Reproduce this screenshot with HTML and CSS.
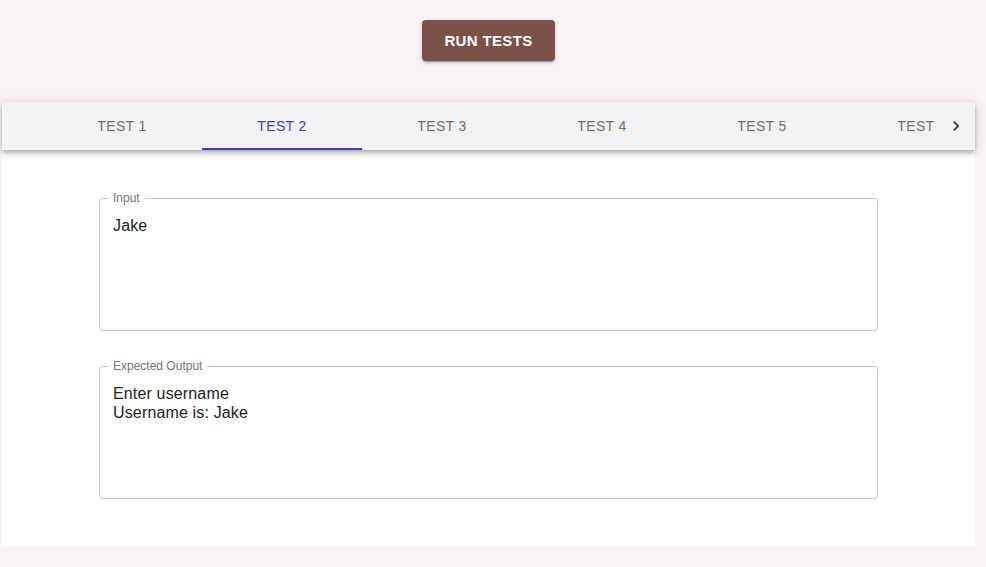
FILE: index.html
```html
<!DOCTYPE html>
<html>
<head>
<meta charset="utf-8">
<link rel="stylesheet" href="styles.css">
</head>
<body>
<div class="page">
  <div class="toolbar">
    <button class="run-btn">Run Tests</button>
  </div>
  <div class="panel">
    <div class="tabbar">
      <div class="scroll-btn"></div>
      <div class="tabs">
        <div class="tab">Test 1</div>
        <div class="tab active">Test 2</div>
        <div class="tab">Test 3</div>
        <div class="tab">Test 4</div>
        <div class="tab">Test 5</div>
        <div class="tab">Test 6</div>
      </div>
      <div class="scroll-btn">
        <svg width="24" height="24" viewBox="0 0 24 24"><path d="M10 6 8.59 7.41 13.17 12l-4.58 4.59L10 18l6-6z" fill="#333"/></svg>
      </div>
    </div>
    <div class="content">
      <fieldset class="field">
        <legend>Input</legend>
        <div class="value">Jake</div>
      </fieldset>
      <fieldset class="field">
        <legend>Expected Output</legend>
        <div class="value">Enter username<br>Username is: Jake</div>
      </fieldset>
    </div>
  </div>
</div>
</body>
</html>
```

FILE: styles.css
```css
html, body {
  margin: 0;
  padding: 0;
  background: #f9f3f7;
  font-family: "Liberation Sans", Arial, sans-serif;
}
.page {
  margin-left: 2px;
  width: 973px;
}
.toolbar {
  display: flex;
  justify-content: center;
  align-items: flex-start;
  padding-top: 20px;
  height: 102px;
  box-sizing: border-box;
}
.run-btn {
  background: #7c5149;
  color: #fff;
  border: none;
  border-radius: 4px;
  height: 41px;
  padding: 0 22px;
  font-family: "Liberation Sans", Arial, sans-serif;
  font-weight: bold;
  font-size: 15px;
  letter-spacing: 0.35px;
  text-transform: uppercase;
  box-shadow: 0 3px 1px -2px rgba(0,0,0,0.2), 0 2px 2px 0 rgba(0,0,0,0.14), 0 1px 5px 0 rgba(0,0,0,0.12);
}
.panel {
  background: #fff;
  padding-bottom: 47px;
}
.tabbar {
  display: flex;
  height: 48px;
  background: #f3f3f3;
  box-shadow: 0 2px 4px -1px rgba(0,0,0,0.2), 0 4px 5px 0 rgba(0,0,0,0.14), 0 1px 10px 0 rgba(0,0,0,0.12);
  position: relative;
  z-index: 1;
}
.scroll-btn {
  width: 40px;
  flex: none;
  display: flex;
  align-items: center;
  justify-content: center;
}
.scroll-btn svg {
  width: 20px;
  height: 20px;
  margin-left: 2px;
}
.tabs {
  flex: 1;
  display: flex;
  overflow: hidden;
}
.tab {
  flex: none;
  width: 160px;
  box-sizing: border-box;
  display: flex;
  align-items: center;
  justify-content: center;
  font-size: 14px;
  letter-spacing: 0.4px;
  text-transform: uppercase;
  color: #6e6e6e;
  border-bottom: 2px solid transparent;
  padding-top: 2px;
}
.tab.active {
  color: #3f3faf;
  border-bottom-color: #3f3faf;
}
.content {
  padding: 41px 97px 0;
  display: flex;
  flex-direction: column;
  gap: 28px;
}
.field {
  margin: 0;
  border: 1px solid #c4c4c4;
  border-radius: 4px;
  padding: 0 13px;
  height: 140px;
  box-sizing: border-box;
}
.field legend {
  font-size: 12px;
  line-height: 14px;
  color: #757575;
  padding: 0 5px;
  margin-left: -5px;
}
.value {
  padding-top: 11px;
  font-size: 16px;
  line-height: 19px;
  letter-spacing: 0.15px;
  color: #222;
}
```
